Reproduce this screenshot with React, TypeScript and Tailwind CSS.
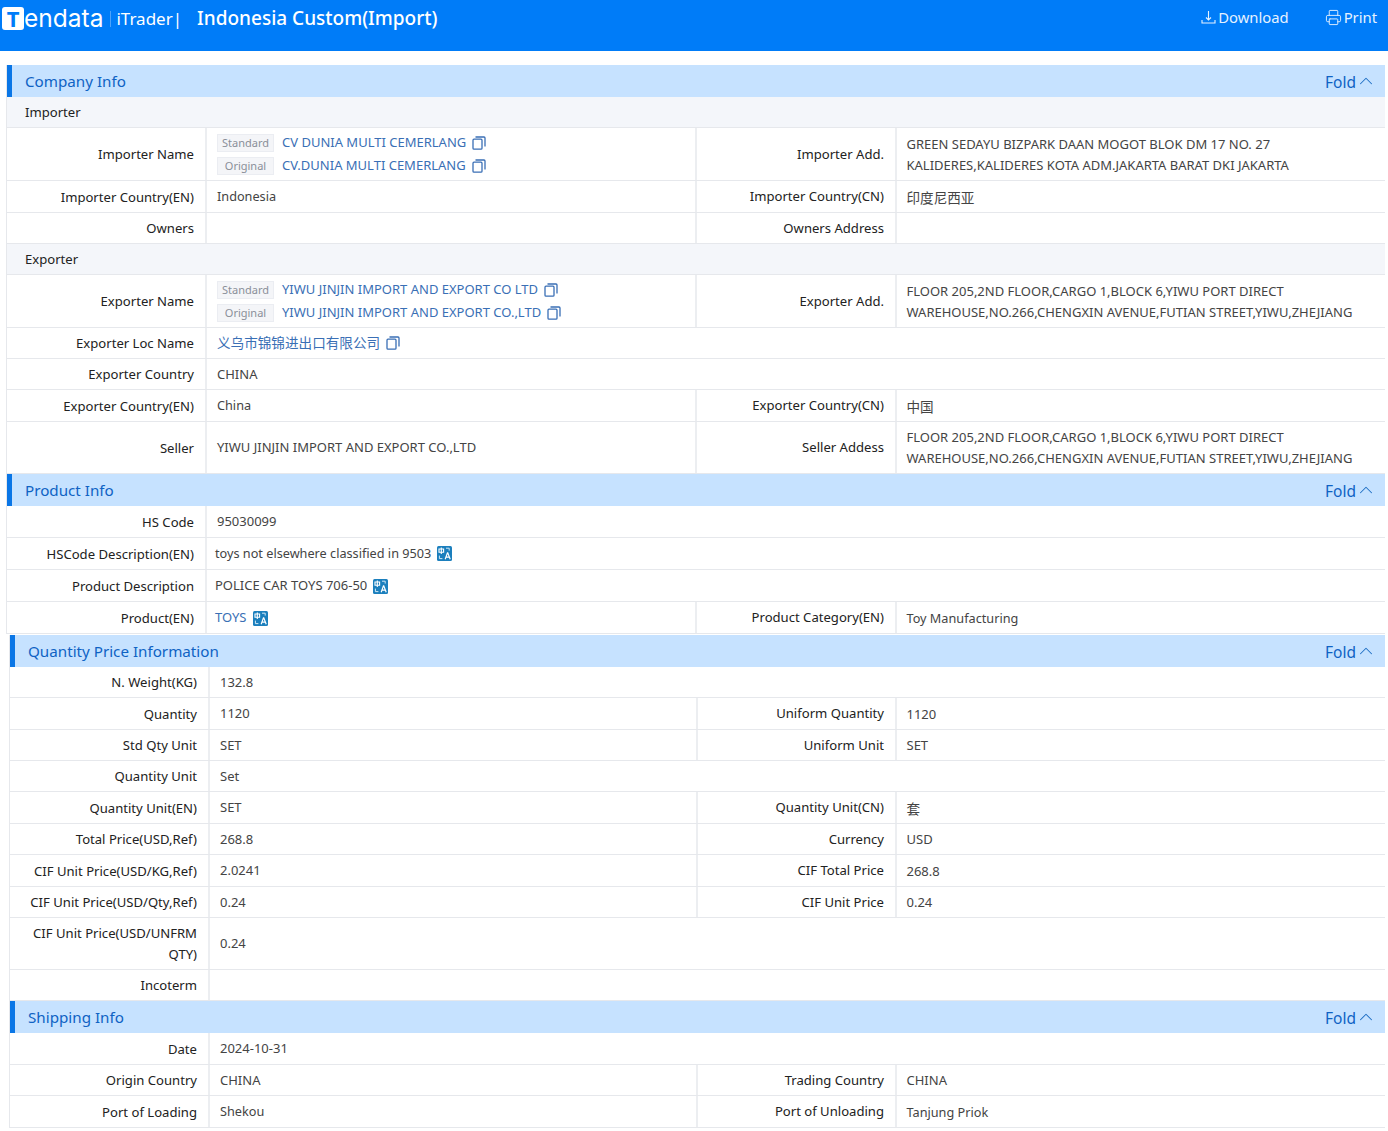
import { ChevronUp, Printer } from "lucide-react";
import type { ReactNode } from "react";

const FONT = "font-['Noto_Sans','Noto_Sans_CJK_SC',sans-serif]";

function CopyIcon() {
    return (
        <svg width="14" height="14" viewBox="0 0 14 14" fill="none" stroke="#3a6fb5" strokeWidth="1.3" className="ml-1.5 shrink-0">
            <rect x="1" y="3.2" width="9" height="10" rx="1" />
            <path d="M3.5 1h8.5a1 1 0 0 1 1 1v8.5" />
        </svg>
    );
}

function TranslateIcon() {
    return (
        <svg width="15" height="15" viewBox="0 0 15 15" className="ml-1.5 shrink-0">
            <rect width="15" height="15" rx="1.5" fill="#1b7fbd" />
            <path d="M2 3h4.6v3.2H2zM4.3 1.4v6.6" fill="none" stroke="#fff" strokeWidth="1.1" />
            <path d="M10.6 6.4 8.2 13.2M10.6 6.4l2.6 6.8M9 11.2h3.3" fill="none" stroke="#fff" strokeWidth="1.2" />
            <path d="M9 2.2h3.2v2.4M2.4 9.6v3h3" fill="none" stroke="#cfe8f7" strokeWidth="1" />
        </svg>
    );
}

function Tag({ children }: { children: ReactNode }) {
    return (
        <span className="w-[57px] h-[18px] bg-[#f4f5f8] border border-[#ebedf2] text-[11px] text-[#8a8f99] flex items-center justify-center shrink-0 mr-2">
            {children}
        </span>
    );
}

function Name({ tag, text }: { tag: string; text: string }) {
    return (
        <div className="flex items-center h-[23px]">
            <Tag>{tag}</Tag>
            <span className="text-[#3a6fb5]">{text}</span>
            <CopyIcon />
        </div>
    );
}

// lowercase runs come out a bit wide at 13px, CJK a bit narrow
function Low({ children }: { children: ReactNode }) {
    return <span className="text-[12.7px]">{children}</span>;
}

function Cjk({ children }: { children: ReactNode }) {
    return <span className="text-[13.6px]">{children}</span>;
}

type RowProps = {
    label: string;
    value?: ReactNode;
    label2?: string;
    value2?: ReactNode;
    h: string;
    cols: string;
    tight?: boolean;
};

function Row({ label, value, label2, value2, h, cols, tight }: RowProps) {
    const half = label2 !== undefined;
    return (
        <div className={`grid ${cols} ${h} border-b border-[#e6e8ec]`}>
            <div className="flex items-center justify-end text-right pt-px pl-[5px] pr-[11px] text-[#222] leading-[21px] text-[13.1px]">{label}</div>
            <div className={`flex items-center pt-px border-l-2 border-[#eceef1] text-[#444] ${half ? "" : "col-span-3"} ${tight ? "pl-[8px]" : "pl-[10px]"}`}>
                {value}
            </div>
            {half && (
                <>
                    <div className="flex items-center justify-end pt-px pr-[11px] border-l-2 border-[#eceef1] text-[#222] text-[13.1px]">{label2}</div>
                    <div className="flex items-center pt-px pl-[9.5px] border-l-2 border-[#eceef1] text-[#444] leading-[21px]">{value2}</div>
                </>
            )}
        </div>
    );
}

function SectionHead({ title }: { title: string }) {
    return (
        <div className="h-[32px] bg-[#c6e2ff] border-l-[5px] border-[#0a76e6] flex items-center justify-between pl-[13px] pr-[8px]">
            <span className="text-[15.2px] text-[#0f62c4]">{title}</span>
            <span className="flex items-center text-[15.5px] text-[#0f62c4] mt-1">
                Fold
                <ChevronUp size={22} strokeWidth={1.1} className="-ml-px -mt-1 text-[#1f6fc4]" />
            </span>
        </div>
    );
}

function SubHead({ title }: { title: string }) {
    return (
        <div className="h-[31px] bg-[#f4f6fa] border-b border-[#e6e8ec] flex items-center pt-px pl-[18px] text-[#222] text-[13.1px]">{title}</div>
    );
}

const A = "grid-cols-[198px_490px_200px_1fr]";
const B = "grid-cols-[198px_488px_199px_1fr]";

export default function App() {
    return (
        <div className={`${FONT} w-[1388px] h-[1131px] overflow-hidden bg-white text-[13px]`}>
            <div className="h-[51px] bg-[#007cf8] flex items-start justify-between text-white">
                <div className="flex items-center h-[37px]">
                    <div className="ml-[2px] w-[22px] h-[23px] bg-white rounded-[3px] flex items-center justify-center text-[#007cf8] text-[22px] font-bold">T</div>
                    <span className="font-['Inter',sans-serif] text-[24.5px] leading-none">endata</span>
                    <span className="w-px h-[16px] bg-[#4da3fb] ml-[7px]"></span>
                    <span className="text-[17px] ml-[5px]">iTrader|</span>
                    <span className="text-[19px] font-medium ml-[15px]">Indonesia Custom(Import)</span>
                </div>
                <div className="flex items-center h-[35px] text-[14.8px] text-[#e6f2ff]">
                    <svg width="15" height="15" viewBox="0 0 15 15" fill="none" stroke="currentColor" strokeWidth="1.1">
                        <path d="M7.5 1v8.5M5 7.5l2.5 2.5L10 7.5M1 10v3h13v-3" />
                    </svg>
                    <span className="ml-[2px]">Download</span>
                    <Printer size={17} strokeWidth={1.3} className="ml-[36px]" />
                    <span className="ml-[2px] mr-[11px]">Print</span>
                </div>
            </div>

            <div className="mt-[14px] ml-[6px] mr-[3px] border-l border-[#e6e8ec]">
                <SectionHead title="Company Info" />
                <SubHead title="Importer" />
                <Row
                    cols={A}
                    h="h-[53px]"
                    label="Importer Name"
                    value={
                        <div>
                            <Name tag="Standard" text="CV DUNIA MULTI CEMERLANG" />
                            <Name tag="Original" text="CV.DUNIA MULTI CEMERLANG" />
                        </div>
                    }
                    label2="Importer Add."
                    value2={<div>GREEN SEDAYU BIZPARK DAAN MOGOT BLOK DM 17 NO. 27<br />KALIDERES,KALIDERES KOTA ADM.JAKARTA BARAT DKI JAKARTA</div>}
                />
                <Row cols={A} h="h-[32px]" label="Importer Country(EN)" value={<Low>Indonesia</Low>} label2="Importer Country(CN)" value2={<Cjk>印度尼西亚</Cjk>} />
                <Row cols={A} h="h-[31px]" label="Owners" label2="Owners Address" />
                <SubHead title="Exporter" />
                <Row
                    cols={A}
                    h="h-[53px]"
                    label="Exporter Name"
                    value={
                        <div>
                            <Name tag="Standard" text="YIWU JINJIN IMPORT AND EXPORT CO LTD" />
                            <Name tag="Original" text="YIWU JINJIN IMPORT AND EXPORT CO.,LTD" />
                        </div>
                    }
                    label2="Exporter Add."
                    value2={<div>FLOOR 205,2ND FLOOR,CARGO 1,BLOCK 6,YIWU PORT DIRECT<br />WAREHOUSE,NO.266,CHENGXIN AVENUE,FUTIAN STREET,YIWU,ZHEJIANG</div>}
                />
                <Row
                    cols={A}
                    h="h-[31px]"
                    label="Exporter Loc Name"
                    value={<span className="flex items-center text-[#3a6fb5]"><Cjk>义乌市锦锦进出口有限公司</Cjk><CopyIcon /></span>}
                />
                <Row cols={A} h="h-[31px]" label="Exporter Country" value="CHINA" />
                <Row cols={A} h="h-[32px]" label="Exporter Country(EN)" value={<Low>China</Low>} label2="Exporter Country(CN)" value2={<Cjk>中国</Cjk>} />
                <Row
                    cols={A}
                    h="h-[52px]"
                    label="Seller"
                    value="YIWU JINJIN IMPORT AND EXPORT CO.,LTD"
                    label2="Seller Addess"
                    value2={<div>FLOOR 205,2ND FLOOR,CARGO 1,BLOCK 6,YIWU PORT DIRECT<br />WAREHOUSE,NO.266,CHENGXIN AVENUE,FUTIAN STREET,YIWU,ZHEJIANG</div>}
                />

                <SectionHead title="Product Info" />
                <Row cols={A} h="h-[32px]" label="HS Code" value="95030099" />
                <Row
                    cols={A}
                    h="h-[32px]"
                    tight
                    label="HSCode Description(EN)"
                    value={<span className="flex items-center"><Low>toys not elsewhere classified in 9503</Low><TranslateIcon /></span>}
                />
                <Row
                    cols={A}
                    h="h-[32px]"
                    tight
                    label="Product Description"
                    value={<span className="flex items-center">POLICE CAR TOYS 706-50<TranslateIcon /></span>}
                />
                <Row
                    cols={A}
                    h="h-[32px]"
                    tight
                    label="Product(EN)"
                    value={<span className="flex items-center text-[#3a6fb5]">TOYS<TranslateIcon /></span>}
                    label2="Product Category(EN)"
                    value2={<Low>Toy Manufacturing</Low>}
                />
            </div>

            <div className="mt-px ml-[9px] mr-[3px] border-l border-[#e6e8ec]">
                <SectionHead title="Quantity Price Information" />
                <Row cols={B} h="h-[31px]" label="N. Weight(KG)" value="132.8" />
                <Row cols={B} h="h-[32px]" label="Quantity" value="1120" label2="Uniform Quantity" value2="1120" />
                <Row cols={B} h="h-[31px]" label="Std Qty Unit" value="SET" label2="Uniform Unit" value2="SET" />
                <Row cols={B} h="h-[31px]" label="Quantity Unit" value="Set" />
                <Row cols={B} h="h-[32px]" label="Quantity Unit(EN)" value="SET" label2="Quantity Unit(CN)" value2={<Cjk>套</Cjk>} />
                <Row cols={B} h="h-[31px]" label="Total Price(USD,Ref)" value="268.8" label2="Currency" value2="USD" />
                <Row cols={B} h="h-[32px]" label="CIF Unit Price(USD/KG,Ref)" value="2.0241" label2="CIF Total Price" value2="268.8" />
                <Row cols={B} h="h-[31px]" label="CIF Unit Price(USD/Qty,Ref)" value="0.24" label2="CIF Unit Price" value2="0.24" />
                <Row cols={B} h="h-[52px]" label="CIF Unit Price(USD/UNFRM QTY)" value="0.24" />
                <Row cols={B} h="h-[31px]" label="Incoterm" />
                <SectionHead title="Shipping Info" />
                <Row cols={B} h="h-[32px]" label="Date" value="2024-10-31" />
                <Row cols={B} h="h-[31px]" label="Origin Country" value="CHINA" label2="Trading Country" value2="CHINA" />
                <Row cols={B} h="h-[32px]" label="Port of Loading" value={<Low>Shekou</Low>} label2="Port of Unloading" value2={<Low>Tanjung Priok</Low>} />
            </div>
        </div>
    );
}
